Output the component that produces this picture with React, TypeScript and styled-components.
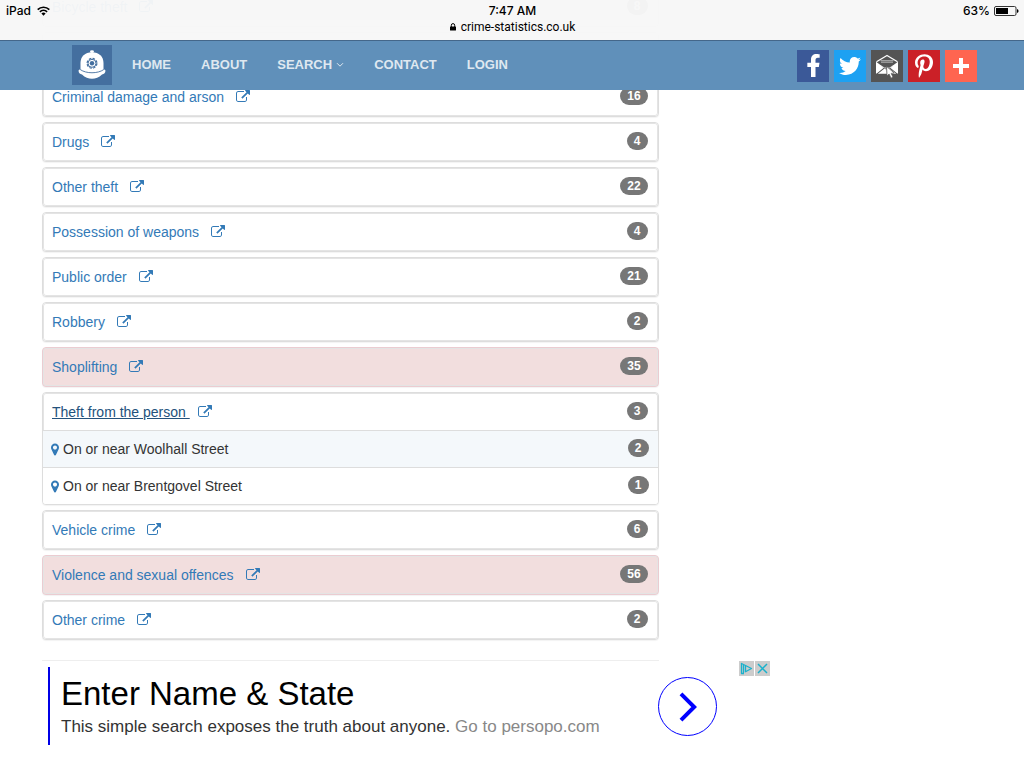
import React from "react";
import styled, { createGlobalStyle, css } from "styled-components";
import { FaFacebookF, FaPinterestP, FaTwitter } from "react-icons/fa";

const GlobalStyle = createGlobalStyle`
  *, *::before, *::after { box-sizing: border-box; }
  body {
    margin: 0;
    background: #fff;
    color: #333;
    font: 14px/20px "Liberation Sans", Arial, sans-serif;
    overflow-x: hidden;
  }
  ul { list-style: none; margin: 0; padding: 0; }
  a { text-decoration: none; }
  svg { display: block; flex: none; }
`;

const TopArea = styled.div`
  position: sticky;
  top: 0;
  z-index: 10;
`;

const StatusBar = styled.header`
  display: grid;
  grid-template-columns: 1fr auto 1fr;
  align-items: start;
  height: 40px;
  padding: 3px 5px 0 6px;
  background: rgba(247, 247, 247, 0.97);
  color: #000;
  font: 500 12px/16px Inter, sans-serif;
`;

const StatusSide = styled.div<{ $end?: boolean }>`
  display: flex;
  align-items: center;
  gap: ${(p) => (p.$end ? 4 : 6)}px;
  justify-content: ${(p) => (p.$end ? "flex-end" : "flex-start")};
`;

const StatusCentre = styled.div`
  display: flex;
  flex-direction: column;
  align-items: center;
`;

const Address = styled.div`
  display: flex;
  align-items: center;
  gap: 5px;
  font-family: Roboto, sans-serif;
  font-weight: 400;
`;

const NavBar = styled.nav`
  background: #6090ba;
  border-top: 1px solid #44678a;
`;

const NavInner = styled.div`
  display: flex;
  align-items: center;
  max-width: 970px;
  height: 49px;
  margin: 0 auto;
  padding: 0 20px 2px 45px;
`;

const Logo = styled.a`
  display: flex;
  align-items: center;
  justify-content: center;
  width: 40px;
  height: 40px;
  margin-right: 20px;
  background: #446f9f;
`;

const Menu = styled.ul`
  display: flex;
  gap: 30px;
`;

const MenuLink = styled.a`
  display: flex;
  align-items: center;
  gap: 4px;
  color: #dfe8f0;
  font-size: 13px;
  font-weight: 700;
`;

const Shares = styled.div`
  display: flex;
  gap: 5px;
  margin-left: auto;
  padding-top: 2px;
`;

const ShareButton = styled.button<{ $bg: string }>`
  display: flex;
  align-items: center;
  justify-content: center;
  width: 32px;
  height: 32px;
  padding: 0;
  border: 0;
  background: ${(p) => p.$bg};
  color: #fff;
`;

/* The list is scrolled, so its first entries run underneath the top area. */
const Page = styled.main`
  max-width: 970px;
  margin: -103px auto 0;
  padding: 0 15px;
`;

const CrimeList = styled.ul`
  display: flex;
  flex-direction: column;
  gap: 5px;
  width: calc((100% + 30px) * 2 / 3 - 30px);
`;

const Card = styled.li<{ $danger?: boolean }>`
  min-height: 40px;
  border: 1px solid #ddd;
  border-radius: 4px;
  background: #fff;
  box-shadow: 0 1px 1px rgba(0, 0, 0, 0.05);
  overflow: hidden;
  ${(p) =>
    p.$danger &&
    css`
      border-color: #ebccd1;
      background: #f2dede;
    `}
`;

const CardHead = styled.div<{ $open?: boolean }>`
  display: flex;
  align-items: center;
  height: ${(p) => (p.$open ? 37 : 38)}px;
  padding: 0 9px 0 8px;
  border: 1px solid #e4e4e4;
  border-bottom-width: ${(p) => (p.$open ? 0 : 1)}px;
  border-radius: ${(p) => (p.$open ? "3px 3px 0 0" : "3px")};
`;

const CrimeLink = styled.a<{ $open?: boolean }>`
  color: ${(p) => (p.$open ? "#23527c" : "#337ab7")};
  text-decoration: ${(p) => (p.$open ? "underline" : "none")};
  white-space: pre;
`;

const CrimeIcon = styled.a`
  margin-left: 8px;
  color: #337ab7;
`;

const Badge = styled.span`
  min-width: 21px;
  height: 18px;
  margin: 0 0 2px auto;
  padding: 0 7px;
  border-radius: 10px;
  background: #777;
  color: #fff;
  font-size: 12px;
  font-weight: 700;
  line-height: 18px;
  text-align: center;
`;

const Place = styled.li<{ $shaded: boolean }>`
  display: flex;
  align-items: center;
  gap: 4px;
  height: 37px;
  padding: 0 9px 0 8px;
  border-top: 1px solid #ddd;
  background: ${(p) => (p.$shaded ? "#f4f8fb" : "#fff")};
`;

const Divider = styled.hr`
  width: calc((100% + 30px) * 2 / 3 - 30px);
  height: 1px;
  margin: 20px 0 0;
  border: 0;
  background: #eee;
`;

const Advert = styled.aside`
  display: flex;
  align-items: flex-start;
  max-width: 728px;
  height: 90px;
`;

const AdCopy = styled.div`
  flex: 1;
  height: 78px;
  margin: 6px 0 0 6px;
  padding: 6px 0 0 11px;
  border-left: 2px solid #0000e6;
`;

const AdTitle = styled.a`
  display: block;
  color: #000;
  font-size: 33px;
  line-height: 42px;
`;

const AdText = styled.p`
  margin: 0;
  color: #333;
  font-size: 17px;
  line-height: 24px;
  white-space: nowrap;
`;

const AdSite = styled.a`
  color: #888;
`;

const AdGo = styled.button`
  display: flex;
  align-items: center;
  justify-content: center;
  width: 59px;
  height: 59px;
  margin: 16px 22px 0 0;
  padding: 0;
  border: 1px solid #00f;
  border-radius: 50%;
  background: #fff;
`;

const AdOptions = styled.div`
  display: flex;
  gap: 1px;
`;

const AdOption = styled.button`
  width: 15px;
  height: 15px;
  padding: 0;
  border: 0;
  background: #ccc;
`;

const WifiIcon = () => (
  <svg width="13" height="10" viewBox="0 0 13 10" fill="none" stroke="#000" strokeWidth="1.7">
    <path d="M.7 3.6a8.3 8.3 0 0 1 11.6 0M2.9 5.9a5.2 5.2 0 0 1 7.2 0" />
    <path d="M6.5 9.7 4.4 7.5a3 3 0 0 1 4.2 0z" fill="#000" stroke="none" />
  </svg>
);

const BatteryIcon = () => (
  <svg width="25" height="10" viewBox="0 0 25 10">
    <rect x=".5" y=".5" width="21.5" height="9" rx="1.5" fill="none" stroke="#333" />
    <rect x="2" y="2" width="12" height="6" fill="#000" />
    <path d="M23 3q1.6.4 1.6 2T23 7z" fill="#000" />
  </svg>
);

const LockIcon = () => (
  <svg width="6" height="8" viewBox="0 0 6 8">
    <path d="M1.3 4V2.3a1.7 1.7 0 0 1 3.4 0V4" fill="none" stroke="#000" />
    <rect y="3.4" width="6" height="4.2" rx=".5" fill="#000" />
  </svg>
);

const HelmetIcon = () => (
  <svg width="28" height="30" viewBox="0 0 28 30" fill="#fff">
    <ellipse cx="14" cy="1.600" rx="2" ry="1.300" />
    <path d="M2.500 21V13C2.500 6.500 7 2.300 14 2.300S25.500 6.500 25.500 13v8c-6 3.500-17 3.500-23 0z" />
    <path d="M.6 20.200c.8-1 1.600-.8 2.400-.2 6 3.600 16 3.600 22 0 .8-.6 1.600-.8 2.400.2.3 2.800-1.400 3.600-3.400 4.300C21 27.500 17.500 28.800 14 28.800S7 27.500 4 24.500C2 23.800.3 23 .6 20.200z" />
    <path d="M2.300 19.600c6 4.200 17.400 4.200 23.400 0" fill="none" stroke="#446f9f" strokeWidth=".9" />
    <circle cx="14" cy="13.300" r="4.900" fill="none" stroke="#446f9f" strokeWidth="1.200" strokeDasharray="2.500 1.350" />
    <circle cx="14" cy="13.300" r="4" fill="none" stroke="#446f9f" strokeWidth="1" />
    <circle cx="14" cy="13.300" r="2.200" fill="#446f9f" />
  </svg>
);

const ChevronIcon = () => (
  <svg width="8" height="6" viewBox="0 0 8 6" fill="none" stroke="#dfe8f0">
    <path d="m1 1.200 3 3 3-3" />
  </svg>
);

const EnvelopeIcon = () => (
  <svg width="24" height="26" viewBox="0 0 24 26">
    <path d="M1.500 8.800 12 2.500l10.500 6.300" fill="none" stroke="#fff" strokeWidth="1.300" strokeLinejoin="round" />
    <path d="M5.500 7.700h13M6 9.200h12" fill="none" stroke="#ccc" strokeWidth=".8" />
    <path d="M1 8.800 5.500 12l3 3L1.700 20.500H1zM23 8.800 18.500 12l-3 3 6.800 5.500h.7z" fill="#fff" />
    <path d="M5.500 12.500 9.500 15h5l4-2.500" fill="none" stroke="#fff" strokeWidth=".8" />
    <path d="m2.800 20.700 6.400-5q2.800 1 5.600 0l6.400 5z" fill="#fff" />
    <path d="m11.500 13.300.5 9.700 2.100-1.900 1.900 4.100 2.100-1-1.900-3.800 3-.4z" fill="#fff" stroke="#545454" strokeWidth=".8" />
  </svg>
);

const PlusIcon = () => (
  <svg width="16" height="16" viewBox="0 0 16 16" fill="#fff">
    <path d="M6 0h4v6h6v4h-6v6H6v-6H0V6h6z" />
  </svg>
);

const ExternalIcon = () => (
  <svg width="14" height="14" viewBox="0 0 1792 1792" fill="currentColor">
    <path d="M1408 928v320q0 119-84.500 203.500t-203.500 84.500h-832q-119 0-203.500-84.500t-84.500-203.500v-832q0-119 84.500-203.500t203.500-84.500h704q14 0 23 9t9 23v64q0 14-9 23t-23 9h-704q-66 0-113 47t-47 113v832q0 66 47 113t113 47h832q66 0 113-47t47-113v-320q0-14 9-23t23-9h64q14 0 23 9t9 23zm384-864v512q0 26-19 45t-45 19-45-19l-176-176-652 652q-10 10-23 10t-23-10l-114-114q-10-10-10-23t10-23l652-652-176-176q-19-19-19-45t19-45 45-19h512q26 0 45 19t19 45z" />
  </svg>
);

const MarkerIcon = () => (
  <svg width="8" height="13" viewBox="384 64 1024 1664" fill="#337ab7">
    <path d="M1152 640q0-106-75-181t-181-75-181 75-75 181 75 181 181 75 181-75 75-181zm256 0q0 109-33 179l-364 774q-16 33-47.500 52t-67.500 19-67.500-19-46.500-52l-365-774q-33-70-33-179 0-212 150-362t362-150 362 150 150 362z" />
  </svg>
);

const AdChevron = () => (
  <svg width="18" height="30" viewBox="0 0 18 30" fill="none" stroke="#00f" strokeWidth="4">
    <path d="M2 1.800 15.200 15 2 28.200" />
  </svg>
);

const AdChoicesIcon = () => (
  <svg width="15" height="15" viewBox="0 0 15 15" fill="none" stroke="#1ab1cc" strokeWidth="1.300">
    <path d="M5 12.500H2.500v-10L12.500 7.500 6.500 10.700V5M4.500 4v8" strokeLinejoin="round" />
  </svg>
);

const AdCloseIcon = () => (
  <svg width="15" height="15" viewBox="0 0 15 15" stroke="#1ab1cc" strokeWidth="1.500">
    <path d="m3 3 9 9M12 3l-9 9" />
  </svg>
);

type Crime = {
  name: string;
  count: number;
  danger?: boolean;
  places?: { name: string; count: number }[];
};

const crimes: (Crime | null)[] = [
  { name: "Bicycle theft", count: 8 },
  null,
  { name: "Criminal damage and arson", count: 16 },
  { name: "Drugs", count: 4 },
  { name: "Other theft", count: 22 },
  { name: "Possession of weapons", count: 4 },
  { name: "Public order", count: 21 },
  { name: "Robbery", count: 2 },
  { name: "Shoplifting", count: 35, danger: true },
  {
    name: "Theft from the person",
    count: 3,
    places: [
      { name: "On or near Woolhall Street", count: 2 },
      { name: "On or near Brentgovel Street", count: 1 },
    ],
  },
  { name: "Vehicle crime", count: 6 },
  { name: "Violence and sexual offences", count: 56, danger: true },
  { name: "Other crime", count: 2 },
];

const CrimeCard = ({ crime }: { crime: Crime }) => {
  const open = Boolean(crime.places);
  return (
    <Card $danger={crime.danger}>
      <CardHead $open={open}>
        <CrimeLink href="#" $open={open}>{crime.name + " "}</CrimeLink>
        <CrimeIcon href="#">
          <ExternalIcon />
        </CrimeIcon>
        <Badge>{crime.count}</Badge>
      </CardHead>
      {crime.places && (
        <ul>
          {crime.places.map((place, i) => (
            <Place key={place.name} $shaded={i % 2 === 0}>
              <MarkerIcon />
              <span>{place.name}</span>
              <Badge>{place.count}</Badge>
            </Place>
          ))}
        </ul>
      )}
    </Card>
  );
};

export default function App() {
  return (
    <>
      <GlobalStyle />
      <TopArea>
        <StatusBar>
          <StatusSide>
            <span>iPad</span>
            <WifiIcon />
          </StatusSide>
          <StatusCentre>
            <span>7:47 AM</span>
            <Address>
              <LockIcon />
              <span>crime-statistics.co.uk</span>
            </Address>
          </StatusCentre>
          <StatusSide $end>
            <span>63%</span>
            <BatteryIcon />
          </StatusSide>
        </StatusBar>
        <NavBar>
          <NavInner>
            <Logo href="#">
              <HelmetIcon />
            </Logo>
            <Menu>
              <li><MenuLink href="#">HOME</MenuLink></li>
              <li><MenuLink href="#">ABOUT</MenuLink></li>
              <li><MenuLink href="#">SEARCH<ChevronIcon /></MenuLink></li>
              <li><MenuLink href="#">CONTACT</MenuLink></li>
              <li><MenuLink href="#">LOGIN</MenuLink></li>
            </Menu>
            <Shares>
              <ShareButton $bg="#3b5998"><FaFacebookF size={23} /></ShareButton>
              <ShareButton $bg="#1da1f2"><FaTwitter size={22} /></ShareButton>
              <ShareButton $bg="#545454"><EnvelopeIcon /></ShareButton>
              <ShareButton $bg="#cb2027"><FaPinterestP size={24} /></ShareButton>
              <ShareButton $bg="#ff6550"><PlusIcon /></ShareButton>
            </Shares>
          </NavInner>
        </NavBar>
      </TopArea>
      <Page>
        <CrimeList>
          {crimes.map((crime, i) =>
            crime ? <CrimeCard key={crime.name} crime={crime} /> : <Card key={i} />
          )}
        </CrimeList>
        <Divider />
        <Advert>
          <AdCopy>
            <AdTitle href="#">Enter Name &amp; State</AdTitle>
            <AdText>
              This simple search exposes the truth about anyone.{" "}
              <AdSite href="#">Go to persopo.com</AdSite>
            </AdText>
          </AdCopy>
          <AdGo><AdChevron /></AdGo>
          <AdOptions>
            <AdOption><AdChoicesIcon /></AdOption>
            <AdOption><AdCloseIcon /></AdOption>
          </AdOptions>
        </Advert>
      </Page>
    </>
  );
}
